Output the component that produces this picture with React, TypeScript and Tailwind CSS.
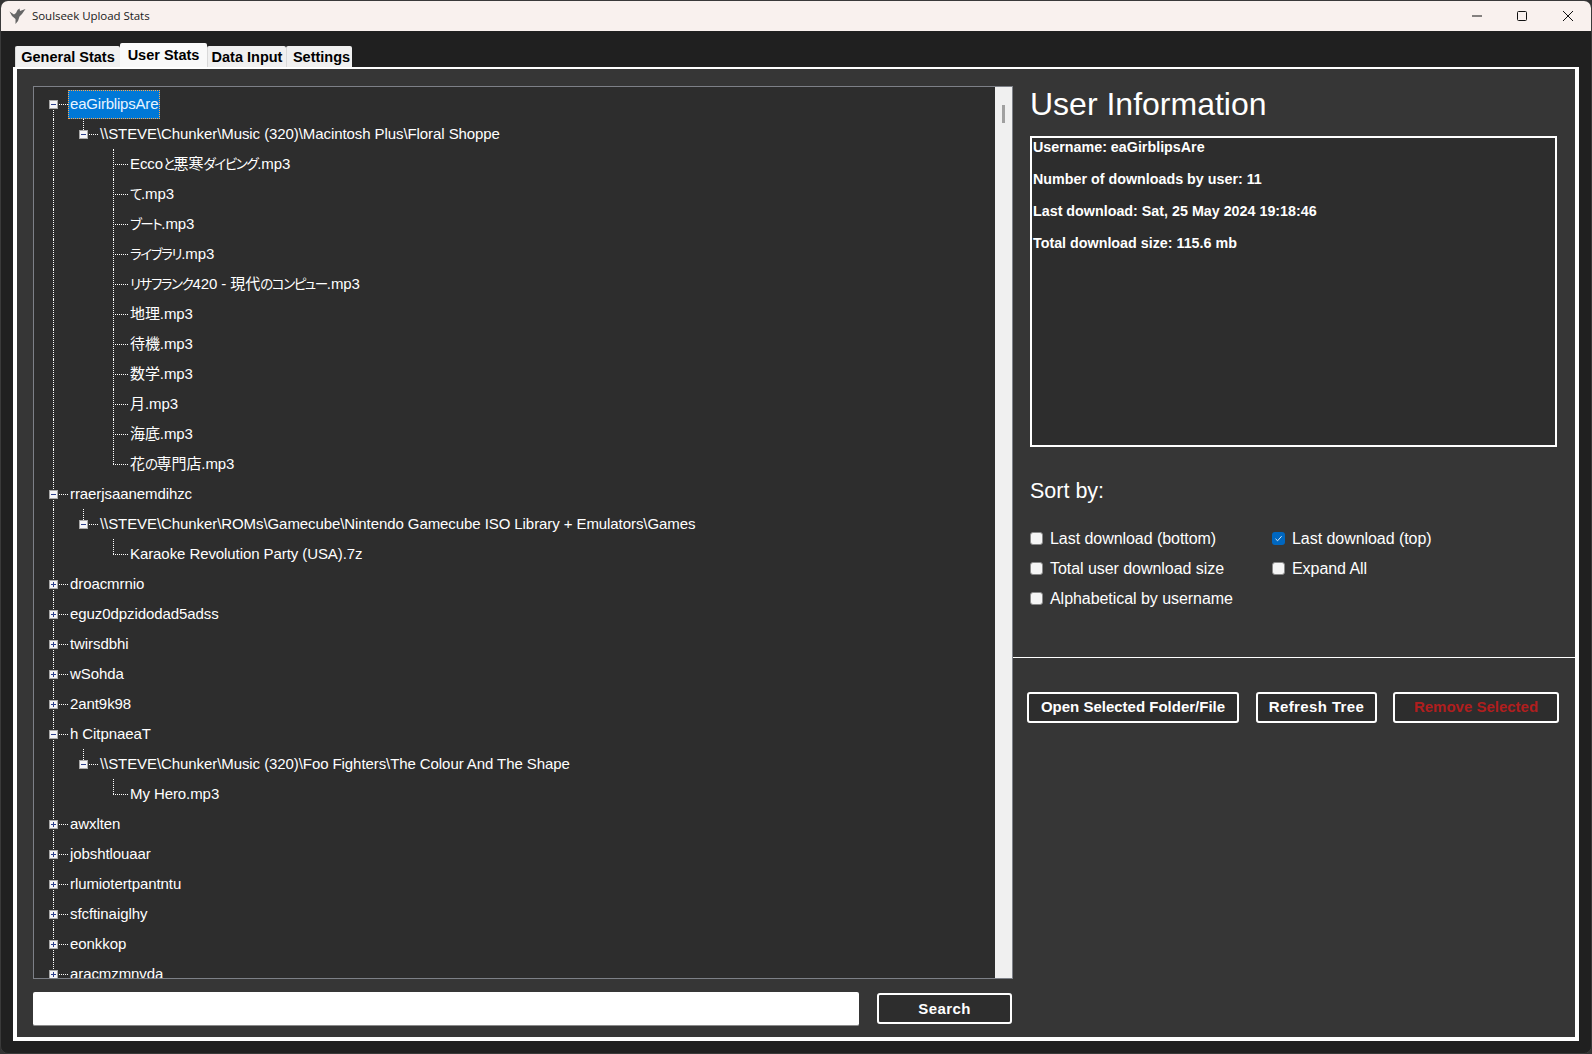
// Soulseek Upload Stats window, User Stats tab
type TreeRow = {
  depth: number;
  text: string;
  box?: "plus" | "minus";
  last?: boolean;
  selected?: boolean;
};

const closedUsers = (names: string[]): TreeRow[] => names.map((text) => ({ depth: 0, text, box: "plus" }));

const rows: TreeRow[] = [
  { depth: 0, text: "eaGirblipsAre", box: "minus", selected: true },
  { depth: 1, text: "\\\\STEVE\\Chunker\\Music (320)\\Macintosh Plus\\Floral Shoppe", box: "minus" },
  { depth: 2, text: "Eccoと悪寒ダイビング.mp3" },
  { depth: 2, text: "て.mp3" },
  { depth: 2, text: "ブート.mp3" },
  { depth: 2, text: "ライブラリ.mp3" },
  { depth: 2, text: "リサフランク420 - 現代のコンピュー.mp3" },
  { depth: 2, text: "地理.mp3" },
  { depth: 2, text: "待機.mp3" },
  { depth: 2, text: "数学.mp3" },
  { depth: 2, text: "月.mp3" },
  { depth: 2, text: "海底.mp3" },
  { depth: 2, text: "花の専門店.mp3", last: true },
  { depth: 0, text: "rraerjsaanemdihzc", box: "minus" },
  { depth: 1, text: "\\\\STEVE\\Chunker\\ROMs\\Gamecube\\Nintendo Gamecube ISO Library + Emulators\\Games", box: "minus" },
  { depth: 2, text: "Karaoke Revolution Party (USA).7z", last: true },
  ...closedUsers(["droacmrnio", "eguz0dpzidodad5adss", "twirsdbhi", "wSohda", "2ant9k98"]),
  { depth: 0, text: "h CitpnaeaT", box: "minus" },
  { depth: 1, text: "\\\\STEVE\\Chunker\\Music (320)\\Foo Fighters\\The Colour And The Shape", box: "minus" },
  { depth: 2, text: "My Hero.mp3", last: true },
  ...closedUsers(["awxlten", "jobshtlouaar", "rlumiotertpantntu", "sfcftinaiglhy", "eonkkop", "aracmzmnvda"]),
];

function ExpandBox({ kind }: { kind: "plus" | "minus" }) {
  return (
    <svg width="9" height="9" viewBox="0 0 9 9" className="absolute left-[11px] top-[11px]">
      <rect x="0.5" y="0.5" width="8" height="8" fill="#f4f4f8" stroke="#a9a9a9" />
      <path d={kind === "plus" ? "M2 4.5h5M4.5 2v5" : "M2 4.5h5"} stroke="#2b3f8c" strokeWidth="1" />
    </svg>
  );
}

// One 30px indent column of the tree, with its dotted connectors
function Guide({ line, branch, box }: { line?: "full" | "top" | "bottom"; branch?: boolean; box?: "plus" | "minus" }) {
  return (
    <div className="relative h-[30px] w-[30px] shrink-0">
      {line === "full" && <div className="absolute left-[15px] top-0 h-[30px] border-l border-dotted border-white" />}
      {line === "top" && <div className="absolute left-[15px] top-0 h-[15px] border-l border-dotted border-white" />}
      {line === "bottom" && <div className="absolute left-[15px] top-[15px] h-[15px] border-l border-dotted border-white" />}
      {branch && <div className="absolute left-[15px] top-[15px] w-[15px] border-t border-dotted border-white" />}
      {box && <ExpandBox kind={box} />}
    </div>
  );
}

// Kana sit tighter in the reference's Japanese font than in Noto
function NodeText({ text }: { text: string }) {
  return (
    <>
      {text.split(/([\u3040-\u30ff]+)/).map((part, i) =>
        i % 2 === 1 ? (
          <span key={i} className="text-[13.5px] tracking-[-1.4px] [font-feature-settings:'palt']">
            {part}
          </span>
        ) : (
          part
        ),
      )}
    </>
  );
}

function TreeLine({ row, first }: { row: TreeRow; first: boolean }) {
  return (
    <div className="flex h-[30px] items-center">
      {row.depth === 0 ? (
        <Guide line={first ? "bottom" : "full"} branch box={row.box} />
      ) : (
        <Guide line="full" />
      )}
      {row.depth === 1 && <Guide line="top" branch box={row.box} />}
      {row.depth === 2 && <Guide />}
      {row.depth === 2 && <Guide line={row.last ? "top" : "full"} branch />}
      <span
        className={
          row.selected
            ? "flex h-[29px] items-center whitespace-nowrap border border-dotted border-[#ffa94d] bg-[#0078d7] px-px tracking-[-0.2px] text-[#e8f4ff]"
            : "whitespace-nowrap px-[2px] text-white"
        }
      >
        <NodeText text={row.text} />
      </span>
    </div>
  );
}

function Tab({ label, width, active }: { label: string; width: string; active?: boolean }) {
  return (
    <div
      className={
        active
          ? `-mb-px flex h-[25px] items-start justify-center rounded-t-[2px] bg-[#f9f9f9] pt-[2px] text-[14.5px] font-bold text-black ${width}`
          : `flex h-[21px] items-center justify-center rounded-t-[2px] border-l border-[#d9d9d9] bg-[#f0f0f0] pt-[2px] text-[14.5px] font-bold text-black ${width}`
      }
    >
      {label}
    </div>
  );
}

function CheckRow({ label, checked }: { label: string; checked?: boolean }) {
  return (
    <div className="flex h-[30px] items-center gap-[7px]">
      {checked ? (
        <div className="-mt-px flex h-[13px] w-[13px] items-center justify-center rounded-[3px] bg-[#0067c0]">
          <svg width="9" height="9" viewBox="0 0 9 9" fill="none">
            <path d="M1.5 4.8 3.6 6.8 7.6 2.2" stroke="#dbe9f6" strokeWidth="1" />
          </svg>
        </div>
      ) : (
        <div className="-mt-px h-[13px] w-[13px] rounded-[3px] border border-[#8a8a8a] bg-[#f6f6f6]" />
      )}
      <span className="text-base tracking-[-0.05px] text-white">{label}</span>
    </div>
  );
}

function ActionButton({ label, width, danger, wide }: { label: string; width: string; danger?: boolean; wide?: boolean }) {
  return (
    <div
      className={`flex h-[31px] items-center justify-center rounded-[3px] border-2 border-white bg-[#2d2d2d] text-[15px] font-bold ${width} ${
        danger ? "text-[#b01e1e]" : "text-white"
      } ${wide ? "tracking-[0.4px]" : ""}`}
    >
      {label}
    </div>
  );
}

export default function App() {
  return (
    <div className="h-[1054px] w-[1592px] bg-[#333333] font-['Liberation_Sans','Noto_Sans_CJK_JP',sans-serif]">
      <div className="flex h-full w-full flex-col overflow-hidden rounded-lg border border-[#3a3a3a] bg-[#202020]">
        {/* Title bar */}
        <div className="flex h-[30px] shrink-0 items-center justify-between bg-[#f9f1ee]">
          <div className="flex items-center">
            <svg width="18" height="17" viewBox="0 0 18 17" className="ml-[8px]">
              <path
                d="M0.5 3.5 5 6.5 7 5 8.5 2 10.5 0.5 11 3 16.5 1 13 6 10.5 8.5 9 13 6.5 16 6.5 11 3 8Z"
                fill="#666666"
              />
            </svg>
            <span className="ml-[5px] font-['Open_Sans',sans-serif] text-[11.5px] tracking-[-0.05px] text-[#1a1a1a]">Soulseek Upload Stats</span>
          </div>
          <div className="flex items-center">
            <div className="flex h-[30px] w-[45.5px] items-center justify-center">
              <svg width="10" height="10" viewBox="0 0 10 10">
                <path d="M0 5h10" stroke="#111111" />
              </svg>
            </div>
            <div className="flex h-[30px] w-[44px] items-center justify-center">
              <svg width="10" height="10" viewBox="0 0 10 10" fill="none">
                <rect x="0.5" y="0.5" width="9" height="9" rx="1" stroke="#111111" />
              </svg>
            </div>
            <div className="flex h-[30px] w-[47px] items-center justify-center">
              <svg width="10" height="10" viewBox="0 0 10 10">
                <path d="M0 0l10 10M10 0 0 10" stroke="#111111" />
              </svg>
            </div>
          </div>
        </div>

        {/* Tabs */}
        <div className="flex h-[36px] shrink-0 items-end pl-[14px]">
          <Tab label="General Stats" width="w-[105px]" />
          <Tab label="User Stats" width="w-[87px]" active />
          <Tab label="Data Input" width="w-[79px]" />
          <Tab label="Settings" width="w-[66px] pl-[4px]" />
        </div>

        {/* Tab page */}
        <div className="ml-[12px] flex h-[974px] w-[1566px] border-x-4 border-b-4 border-t-2 border-white bg-[#363636]">
          <div className="flex w-[996px] shrink-0 flex-col pl-[16px] pt-[17px]">
            <div className="flex h-[893px] overflow-hidden border border-[#7d8087] bg-[#2d2d2d]">
              <div className="h-full flex-1 overflow-hidden pl-[4px] pt-[2px] text-[15px] tracking-[-0.08px]">
                {rows.map((row, index) => (
                  <TreeLine key={index} row={row} first={index === 0} />
                ))}
              </div>
              <div className="flex w-[17px] shrink-0 justify-center bg-[#f0f0f0] pt-[18px]">
                <div className="h-[18px] w-[3px] bg-[#a0a0a0]" />
              </div>
            </div>
            <div className="mt-[13px] flex items-start">
              <div className="h-[34px] w-[826px] rounded-[2px] border-b border-[#8a8a8a] bg-white" />
              <div className="ml-[18px] mt-px">
                <ActionButton label="Search" width="w-[135px] pt-px" wide />
              </div>
            </div>
          </div>

          <div className="flex flex-1 flex-col">
            <div className="flex h-[67px] shrink-0 items-center pl-[17px] pt-[2px] text-[32px] font-light text-white">User Information</div>
            <div className="ml-[17px] flex h-[311px] w-[527px] flex-col gap-[14px] border-2 border-white bg-[#2d2d2d] pl-px text-[14.3px] font-bold leading-[18px] text-white">
              <div>Username: eaGirblipsAre</div>
              <div>Number of downloads by user: 11</div>
              <div>Last download: Sat, 25 May 2024 19:18:46</div>
              <div>Total download size: 115.6 mb</div>
            </div>
            <div className="ml-[17px] mt-[31px] text-[21.5px] leading-[26px] text-white">Sort by:</div>
            <div className="ml-[17px] mt-[20px] grid w-[480px] grid-cols-[242px_1fr]">
              <CheckRow label="Last download (bottom)" />
              <CheckRow label="Last download (top)" checked />
              <CheckRow label="Total user download size" />
              <CheckRow label="Expand All" />
              <CheckRow label="Alphabetical by username" />
            </div>
            <div className="mt-[43px] h-px bg-white" />
            <div className="ml-[14px] mt-[34px] flex">
              <ActionButton label="Open Selected Folder/File" width="w-[212px]" />
              <div className="ml-[17px]">
                <ActionButton label="Refresh Tree" width="w-[121px]" wide />
              </div>
              <div className="ml-[16px]">
                <ActionButton label="Remove Selected" width="w-[166px]" danger />
              </div>
            </div>
          </div>
        </div>
      </div>
    </div>
  );
}
